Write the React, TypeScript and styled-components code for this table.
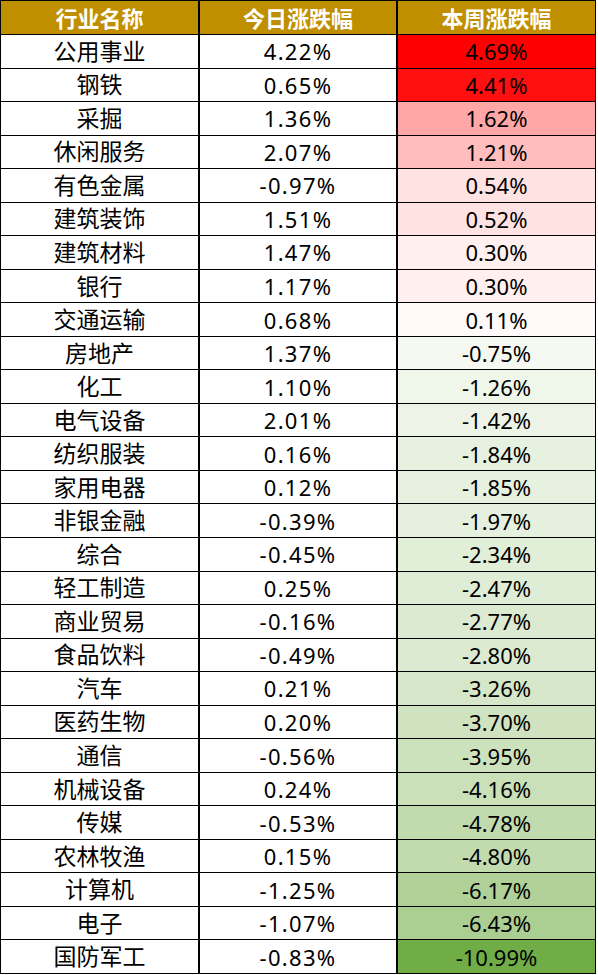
import React from 'react'
import styled, { createGlobalStyle } from 'styled-components'

interface IRow {
  name: string
  today: string
  week: number
}

const rows: IRow[] = [
  { name: '公用事业', today: '4.22%', week: 4.69 },
  { name: '钢铁', today: '0.65%', week: 4.41 },
  { name: '采掘', today: '1.36%', week: 1.62 },
  { name: '休闲服务', today: '2.07%', week: 1.21 },
  { name: '有色金属', today: '-0.97%', week: 0.54 },
  { name: '建筑装饰', today: '1.51%', week: 0.52 },
  { name: '建筑材料', today: '1.47%', week: 0.3 },
  { name: '银行', today: '1.17%', week: 0.3 },
  { name: '交通运输', today: '0.68%', week: 0.11 },
  { name: '房地产', today: '1.37%', week: -0.75 },
  { name: '化工', today: '1.10%', week: -1.26 },
  { name: '电气设备', today: '2.01%', week: -1.42 },
  { name: '纺织服装', today: '0.16%', week: -1.84 },
  { name: '家用电器', today: '0.12%', week: -1.85 },
  { name: '非银金融', today: '-0.39%', week: -1.97 },
  { name: '综合', today: '-0.45%', week: -2.34 },
  { name: '轻工制造', today: '0.25%', week: -2.47 },
  { name: '商业贸易', today: '-0.16%', week: -2.77 },
  { name: '食品饮料', today: '-0.49%', week: -2.8 },
  { name: '汽车', today: '0.21%', week: -3.26 },
  { name: '医药生物', today: '0.20%', week: -3.7 },
  { name: '通信', today: '-0.56%', week: -3.95 },
  { name: '机械设备', today: '0.24%', week: -4.16 },
  { name: '传媒', today: '-0.53%', week: -4.78 },
  { name: '农林牧渔', today: '0.15%', week: -4.8 },
  { name: '计算机', today: '-1.25%', week: -6.17 },
  { name: '电子', today: '-1.07%', week: -6.43 },
  { name: '国防军工', today: '-0.83%', week: -10.99 },
]

const maxWeek = Math.max(...rows.map((r) => r.week))
const minWeek = Math.min(...rows.map((r) => r.week))

// white -> red above zero, white -> green below zero
const scaleColor = (v: number) => {
  const mix = (to: number[], t: number) =>
    `rgb(${to.map((c) => Math.round(255 + (c - 255) * t)).join(',')})`
  if (v >= 0) return mix([255, 0, 0], v / maxWeek)
  return mix([112, 173, 71], v / minWeek)
}

const GlobalStyle = createGlobalStyle`
  body {
    margin: 0;
    background: #fff;
    font-family: 'Noto Sans', 'Noto Sans CJK SC', sans-serif;
  }
`

const Table = styled.div`
  box-sizing: border-box;
  display: grid;
  grid-template-columns: 199px 198px 198px;
  grid-template-rows: 34px repeat(28, 1fr);
  width: 596px;
  height: 974px;
  border-left: 1px solid #000;
  border-top: 1px solid #000;
`

const Cell = styled.div<{ $col: number; $bg?: string }>`
  box-sizing: border-box;
  display: flex;
  align-items: center;
  justify-content: center;
  border-bottom: 1px solid #000;
  border-right: ${(p) => (p.$col === 2 ? 1 : 2)}px solid #000;
  background: ${(p) => p.$bg || '#fff'};
  color: #000;
  font-size: ${(p) => (p.$col === 0 ? 23 : 22)}px;
  line-height: 1;
  letter-spacing: ${(p) => (p.$col === 1 ? '1.3px' : '0')};
  white-space: nowrap;
`

const HeadCell = styled(Cell)`
  background: #bf8f00;
  color: #fff;
  font-weight: 700;
  font-size: 22px;
  letter-spacing: 0;
  padding-top: 1px;
`

const App: React.FC = () => (
  <>
    <GlobalStyle />
    <Table>
      <HeadCell $col={0}>行业名称</HeadCell>
      <HeadCell $col={1}>今日涨跌幅</HeadCell>
      <HeadCell $col={2}>本周涨跌幅</HeadCell>
      {rows.map((row) => (
        <React.Fragment key={row.name}>
          <Cell $col={0}>{row.name}</Cell>
          <Cell $col={1}>{row.today}</Cell>
          <Cell $col={2} $bg={scaleColor(row.week)}>
            {row.week.toFixed(2)}%
          </Cell>
        </React.Fragment>
      ))}
    </Table>
  </>
)

export default App
